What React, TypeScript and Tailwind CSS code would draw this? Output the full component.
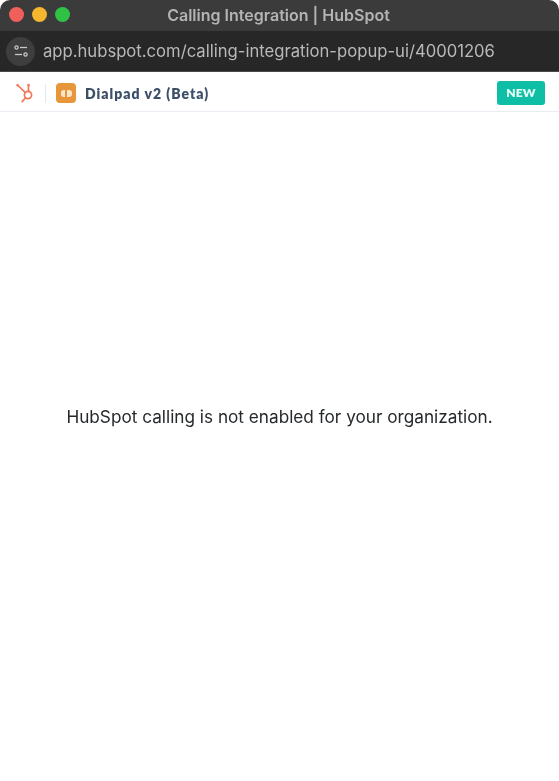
function HubSpotMark() {
  return (
    <svg className="w-[20px] h-[22px]" viewBox="0 0 20 22" fill="none" stroke="#f2785a" strokeWidth={1.7} strokeLinecap="round">
      <circle cx="13" cy="13" r="3.6" />
      <path d="M3 3.5l7.2 6.8" />
      <path d="M13.5 9.4V3.5" />
      <path d="M10.2 16l-3 3.6" />
      <circle cx="2.6" cy="3.2" r="1.3" fill="#f2785a" stroke="none" />
      <circle cx="13.5" cy="3" r="1.3" fill="#f2785a" stroke="none" />
    </svg>
  );
}

function DialpadMark() {
  return (
    <div className="w-5 h-5 rounded-[4px] bg-[#e8963a] flex items-center justify-center">
      <div className="w-[11px] h-[7px] rounded-[3px] bg-[#fbe6c8] flex items-center justify-center">
        <div className="w-[2px] h-[7px] bg-[#e8963a]" />
      </div>
    </div>
  );
}

export default function App() {
  return (
    <div className="w-[559px] h-[781px] bg-white overflow-hidden font-['Inter',sans-serif] blur-[0.5px]">
      {/* window chrome */}
      <div className="h-[31px] bg-[#3b3b3b] rounded-t-[10px] flex items-center pb-[2px]">
        <div className="flex items-center gap-[8px] pl-[9px]">
          <span className="w-[15px] h-[15px] rounded-full bg-[#f0605a]" />
          <span className="w-[15px] h-[15px] rounded-full bg-[#f5b52e]" />
          <span className="w-[15px] h-[15px] rounded-full bg-[#2fc244]" />
        </div>
        <div className="flex-1 text-center text-[16px] font-semibold text-[#b4b4b4] pr-[72px] font-['Inter',sans-serif]">
          Calling Integration | HubSpot
        </div>
      </div>
      <div className="h-[41px] bg-[#272727] border-b border-[#4a4a4a] flex items-center pl-[6px] gap-[8px]">
        <div className="w-[29px] h-[29px] rounded-full bg-[#3e3e3e] flex items-center justify-center">
          <svg className="w-[16px] h-[14px]" viewBox="0 0 16 14" fill="none" stroke="#c8c8c8" strokeWidth={1.3}>
            <circle cx="3.5" cy="3.5" r="1.6" />
            <path d="M7 3.5h7" />
            <path d="M2 10.5h7" />
            <circle cx="12.5" cy="10.5" r="1.6" />
          </svg>
        </div>
        <span className="text-[16.65px] text-[#b9b9b9]">app.hubspot.com/calling-integration-popup-ui/40001206</span>
      </div>
      {/* integration header */}
      <div className="h-[40px] border-b border-[#e8ecf3] flex items-center pt-[3px] pl-[15px] pr-[14px]">
        <HubSpotMark />
        <div className="w-px h-[19px] bg-[#e3e8ef] ml-[10px] mr-[10px]" />
        <DialpadMark />
        <span className="ml-[9px] text-[14px] font-extrabold text-[#3c4f68] font-['Lato',sans-serif] tracking-[1px]">Dialpad v2 (Beta)</span>
        <span className="ml-auto w-[48px] h-[24px] rounded-[3px] bg-[#0fbfa5] flex items-center justify-center text-[12px] font-extrabold text-[#e6fbf6] tracking-[0.2px] font-['Lato',sans-serif]">
          NEW
        </span>
      </div>
      {/* message */}
      <div className="pt-[292px] text-center text-[17.2px] text-[#26292c]">
        HubSpot calling is not enabled for your organization.
      </div>
    </div>
  );
}
